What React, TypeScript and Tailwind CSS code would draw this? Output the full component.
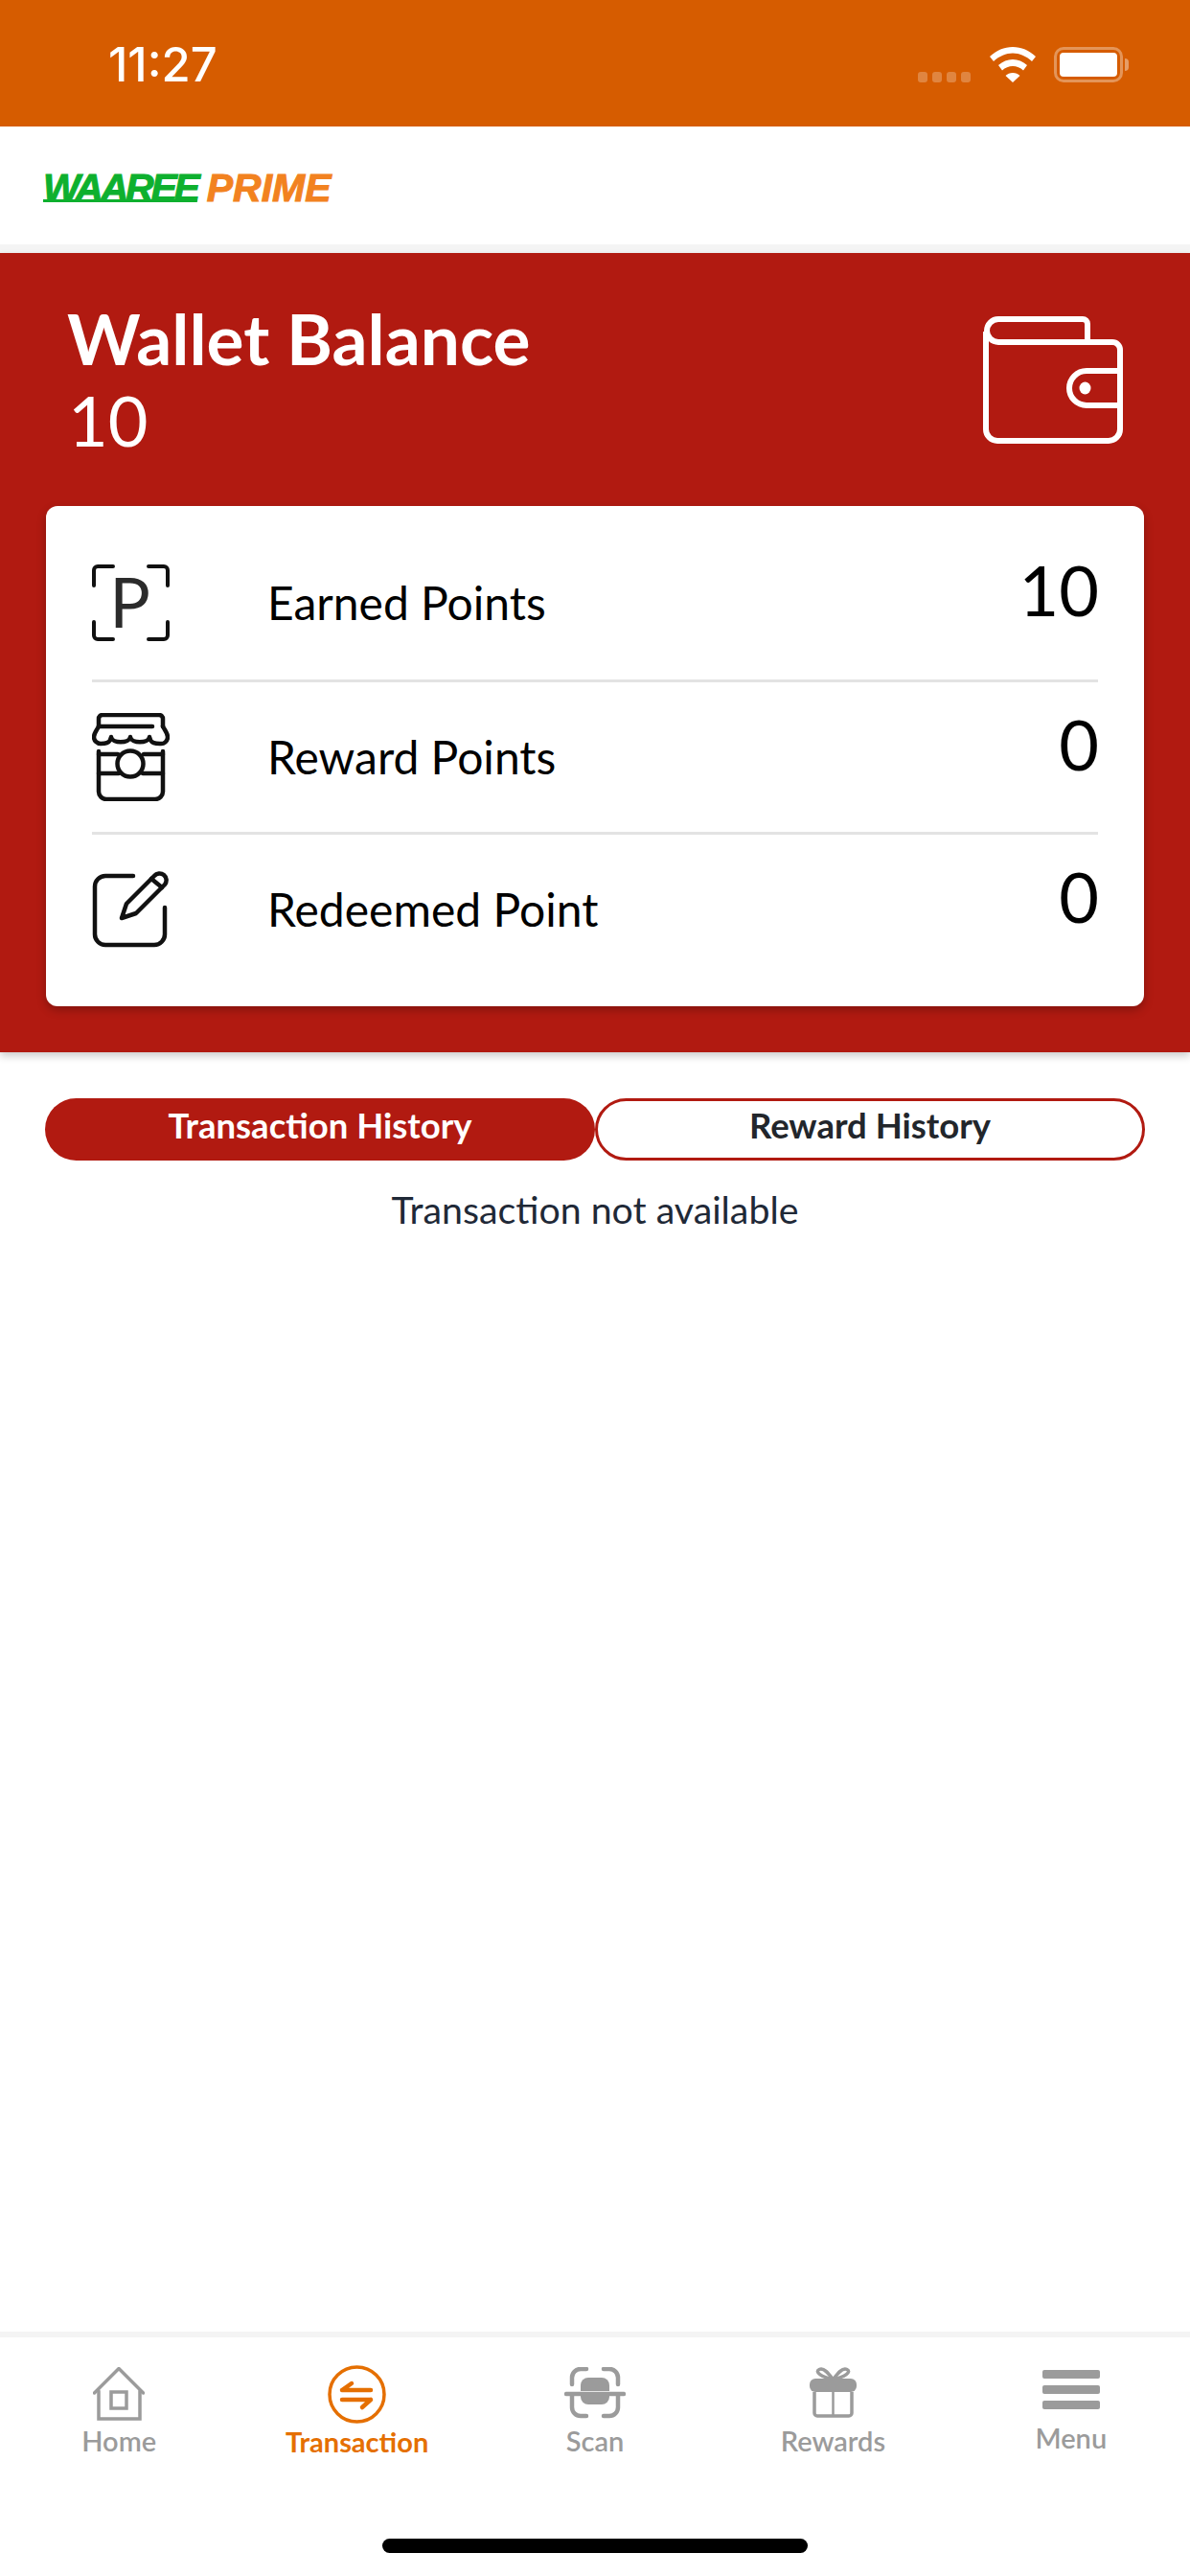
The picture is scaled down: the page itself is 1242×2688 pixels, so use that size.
const lato = { fontFamily: 'Lato, "Noto Sans", sans-serif' };

function WalletIcon() {
  return (
    <svg width="147" height="133" viewBox="0 0 147 133" fill="none" stroke="white" strokeWidth="6">
      <path d="M3 16V118a12 12 0 0 0 12 12H131a12 12 0 0 0 12-12V35a8 8 0 0 0-8-8H16" />
      <path d="M16 27a12 12 0 0 1 0-24H104a5 5 0 0 1 5 5V27" />
      <path d="M143 57H108a18 18 0 0 0 0 36H143" />
      <ellipse cx="106.5" cy="75" rx="6" ry="6.5" fill="white" stroke="none" />
    </svg>
  );
}

function PointsIcon() {
  return (
    <div className="relative h-[80px] w-[81px]">
      <svg width="81" height="80" viewBox="0 0 81 80" fill="none" stroke="#111" strokeWidth="4" strokeLinecap="round">
        <path d="M2 22V6a4 4 0 0 1 4-4H22" />
        <path d="M59 2H75a4 4 0 0 1 4 4V22" />
        <path d="M2 60V74a4 4 0 0 0 4 4H22" />
        <path d="M59 78H75a4 4 0 0 0 4-4V60" />
      </svg>
      {/* the P sits over the corner brackets */}
      <span className="absolute inset-0 flex items-center justify-center pr-[2px] pb-[3px] text-[71px] leading-none text-[#2b2b2b]">
        P
      </span>
    </div>
  );
}

function StoreIcon() {
  return (
    <svg width="81" height="92" viewBox="0 0 81 92" fill="none" stroke="#111" strokeWidth="4.5" strokeLinecap="round" strokeLinejoin="round">
      <path d="M7 14V6a4 4 0 0 1 4-4H70a4 4 0 0 1 4 4V14" />
      <path d="M7 14H63" />
      <path d="M7 14C5 18 2 21 2 25a7 7 0 0 0 7 7c4 0 10 0 11-7 1 7 19 7 20 0 1 7 19 7 20 0 1 7 7 7 11 7a7 7 0 0 0 8-7c0-4-3-7-5-11" />
      <path d="M7 40V82a8 8 0 0 0 8 8H66a8 8 0 0 0 8-8V40" />
      <path d="M7 43H27M54 43H74M7 63H28M53 63H74" />
      <circle cx="40" cy="53" r="13.5" />
    </svg>
  );
}

function EditIcon() {
  return (
    <svg width="81" height="80" viewBox="0 0 81 80" fill="none" stroke="#111" strokeWidth="4.5" strokeLinecap="round" strokeLinejoin="round">
      <path d="M43 5H14A11 11 0 0 0 3 16V66A11 11 0 0 0 14 77H65A11 11 0 0 0 76 66V38" />
      <path d="M31 49L36 34L65 5a6.500 6.500 0 0 1 11 9L46 44Z" />
      <path d="M62 8L73 17" />
    </svg>
  );
}

function HomeIcon() {
  return (
    <svg width="54" height="56" viewBox="0 0 54 56" fill="none" stroke="#9b9b9b" strokeWidth="3.5" strokeLinecap="round">
      <path d="M1.500 27L27 1.500L52.500 27" />
      <path d="M6 25V54H49V25" />
      <rect x="19" y="26" width="16" height="17" />
    </svg>
  );
}

function TransactionIcon() {
  return (
    <svg width="61" height="61" viewBox="0 0 61 61" fill="none" stroke="#e56f00" strokeLinecap="round">
      <circle cx="30.500" cy="30.500" r="28.500" strokeWidth="3.5" />
      <path d="M15 26H45M15 26L25 19M15 36H45M45 36L36 44" strokeWidth="4.5" />
    </svg>
  );
}

function ScanIcon() {
  return (
    <svg width="64" height="54" viewBox="0 0 64 54" fill="none" stroke="#9b9b9b" strokeWidth="4.5" strokeLinecap="round">
      <path d="M8 18V11a9 9 0 0 1 9-9H23" />
      <path d="M41 2H47a9 9 0 0 1 9 9V18" />
      <path d="M8 30V42a9 9 0 0 0 9 9H23" />
      <path d="M41 51H47a9 9 0 0 0 9-9V30" />
      <path d="M2 28H62" />
      <path d="M17 25V19a8 8 0 0 1 8-8H39a8 8 0 0 1 8 8V25Z" fill="#9b9b9b" stroke="none" />
      <path d="M17 30H47V31a8 8 0 0 1-8 8H25a8 8 0 0 1-8-8Z" fill="#9b9b9b" stroke="none" />
    </svg>
  );
}

function GiftIcon() {
  return (
    <svg width="49" height="53" viewBox="0 0 49 53" fill="none" stroke="#9b9b9b" strokeWidth="3.5" strokeLinejoin="round">
      <path d="M24.500 13C20 7 15 0 10 2.500S12 10 24.500 13C29 7 34 0 39 2.500S37 10 24.500 13Z" />
      <rect x="0" y="12" width="49" height="14" rx="6" fill="#9b9b9b" stroke="none" />
      <path d="M5 26V48a3 3 0 0 0 3 3H41a3 3 0 0 0 3-3V26" />
      <path d="M24.500 13V51" strokeWidth="2.5" />
    </svg>
  );
}

function MenuIcon() {
  return (
    <div className="flex h-[41px] w-[60px] flex-col justify-between">
      <div className="h-[9px] rounded-[2px] bg-[#9b9b9b]" />
      <div className="h-[9px] rounded-[2px] bg-[#9b9b9b]" />
      <div className="h-[9px] rounded-[2px] bg-[#9b9b9b]" />
    </div>
  );
}

function StatusBar() {
  return (
    <div className="flex h-[132px] items-center justify-between bg-[#d65c00] pt-[3px] pl-[113px] pr-[64px]">
      <span
        className="text-[49px] leading-none font-medium text-white"
        style={{ fontFamily: 'Inter, sans-serif' }}
      >
        11:27
      </span>
      <div className="flex items-center">
        <div className="mt-[26px] mr-[20px] flex gap-[5px]">
          <div className="h-[11px] w-[10px] rounded-[3px] bg-white/25" />
          <div className="h-[11px] w-[10px] rounded-[3px] bg-white/25" />
          <div className="h-[11px] w-[10px] rounded-[3px] bg-white/25" />
          <div className="h-[11px] w-[10px] rounded-[3px] bg-white/25" />
        </div>
        <svg width="48" height="37" viewBox="0 0 48 37" fill="white" className="mr-[19px]">
          <path d="M24 0C33 0 41 3.500 48 10L44 15C38 9.500 31 6.500 24 6.500S10 9.500 4 15L0 10C7 3.500 15 0 24 0Z" />
          <path d="M24 13C29.500 13 34.500 15 39 19L35 24.500C32 21.500 28 20 24 20S16 21.500 13 24.500L9 19C13.500 15 18.500 13 24 13Z" />
          <path d="M24 27C27 27 29.500 28 31.500 30L24 37L16.500 30C18.500 28 21 27 24 27Z" />
        </svg>
        <div className="flex items-center">
          <div className="h-[37px] w-[72px] rounded-[10px] border-[3px] border-white/35 p-[3px]">
            <div className="h-full w-full rounded-[4px] bg-white" />
          </div>
          <div className="ml-[2px] h-[13px] w-[4px] rounded-r-full bg-white/40" />
        </div>
      </div>
    </div>
  );
}

function Logo() {
  return (
    <div
      className="flex items-center pt-[6px] text-[41px] leading-none font-bold italic"
      style={{ fontFamily: '"Liberation Sans", Arial, sans-serif' }}
    >
      <span className="tracking-[-3.2px] text-[#0eb02e] underline decoration-[3px] underline-offset-[-2px] [text-decoration-skip-ink:none] [-webkit-text-stroke:1px_#0eb02e]">
        WAAREE
      </span>
      <span className="ml-[10px] text-[#f28220] [-webkit-text-stroke:1px_#f28220]">PRIME</span>
    </div>
  );
}

function PointsRow({ icon, label, value }: { icon: React.ReactNode; label: string; value: string }) {
  return (
    <div className="flex items-center">
      <div className="flex w-[183px] shrink-0 items-center">{icon}</div>
      <span className="text-[48px] leading-none text-black">{label}</span>
      <span className="-mr-[1px] ml-auto -translate-y-[14px] text-[72px] leading-none text-black">{value}</span>
    </div>
  );
}

function NavItem({ icon, label, active, iconH }: { icon: React.ReactNode; label: string; active?: boolean; iconH: string }) {
  return (
    <div className="flex flex-1 flex-col items-center">
      <div className={`flex items-start justify-center ${iconH}`}>{icon}</div>
      <span className={`text-[29px] leading-[36px] ${active ? 'font-bold text-[#e56f00]' : 'font-semibold text-[#9b9b9b]'}`}>
        {label}
      </span>
    </div>
  );
}

export default function App() {
  return (
    <div className="flex h-[2688px] w-[1242px] flex-col overflow-hidden bg-white" style={lato}>
      <StatusBar />

      <div className="flex h-[123px] items-center pl-[45px]">
        <Logo />
      </div>
      <div className="h-[9px] bg-[#f4f4f4]" />

      {/* Wallet card */}
      <div className="relative z-10 h-[834px] bg-[#b11a11] px-[48px] shadow-[0_4px_8px_rgba(0,0,0,0.2)]">
        <div className="flex h-[264px] items-start justify-between pl-[22px]">
          <div className="pt-[50px] text-white">
            <div className="text-[73px] leading-[78px] font-bold">Wallet Balance</div>
            <div className="pt-[7px] pl-[1px] text-[72px] leading-[78px]">10</div>
          </div>
          <div className="mt-[66px] mr-[21px]">
            <WalletIcon />
          </div>
        </div>

        <div className="flex h-[522px] flex-col rounded-[12px] bg-white px-[48px] shadow-[0_4px_10px_rgba(0,0,0,0.25)]">
          <div className="flex h-[181px] items-center pt-[21px]">
            <div className="w-full">
              <PointsRow icon={<PointsIcon />} label="Earned Points" value="10" />
            </div>
          </div>
          <div className="h-[3px] bg-[#e3e3e3]" />
          <div className="flex h-[156px] items-center">
            <div className="w-full">
              <PointsRow icon={<StoreIcon />} label="Reward Points" value="0" />
            </div>
          </div>
          <div className="h-[3px] bg-[#e3e3e3]" />
          <div className="flex h-[156px] items-center">
            <div className="w-full">
              <PointsRow icon={<EditIcon />} label="Redeemed Point" value="0" />
            </div>
          </div>
        </div>
      </div>

      {/* History tabs */}
      <div className="flex flex-1 flex-col px-[47px] pt-[48px]">
        <div className="flex h-[65px]">
          <div className="flex w-[574px] items-center justify-center rounded-full bg-[#b11a11] pb-[8px] text-[36.5px] font-bold text-white">
            Transaction History
          </div>
          <div className="flex flex-1 items-center justify-center rounded-full border-[3px] border-[#b11a11] bg-white pb-[8px] text-[36.5px] font-bold text-[#22262b]">
            Reward History
          </div>
        </div>
        <div className="mt-[28px] text-center text-[39.3px] leading-[46px] text-[#1f2937]">Transaction not available</div>
      </div>

      {/* Bottom nav */}
      <div className="h-[6px] bg-[#f4f4f4]" />
      <div className="flex h-[249px] flex-col">
        <div className="flex pt-[29px]">
          <NavItem icon={<HomeIcon />} label="Home" iconH="h-[61px] pt-[2px]" />
          <NavItem icon={<TransactionIcon />} label="Transaction" active iconH="h-[62px]" />
          <NavItem icon={<ScanIcon />} label="Scan" iconH="h-[61px] pt-[2px]" />
          <NavItem icon={<GiftIcon />} label="Rewards" iconH="h-[61px] pt-[2px]" />
          <NavItem icon={<MenuIcon />} label="Menu" iconH="h-[58px] pt-[5px]" />
        </div>
        <div className="mx-auto mt-auto mb-[24px] h-[15px] w-[444px] rounded-full bg-black" />
      </div>
    </div>
  );
}
